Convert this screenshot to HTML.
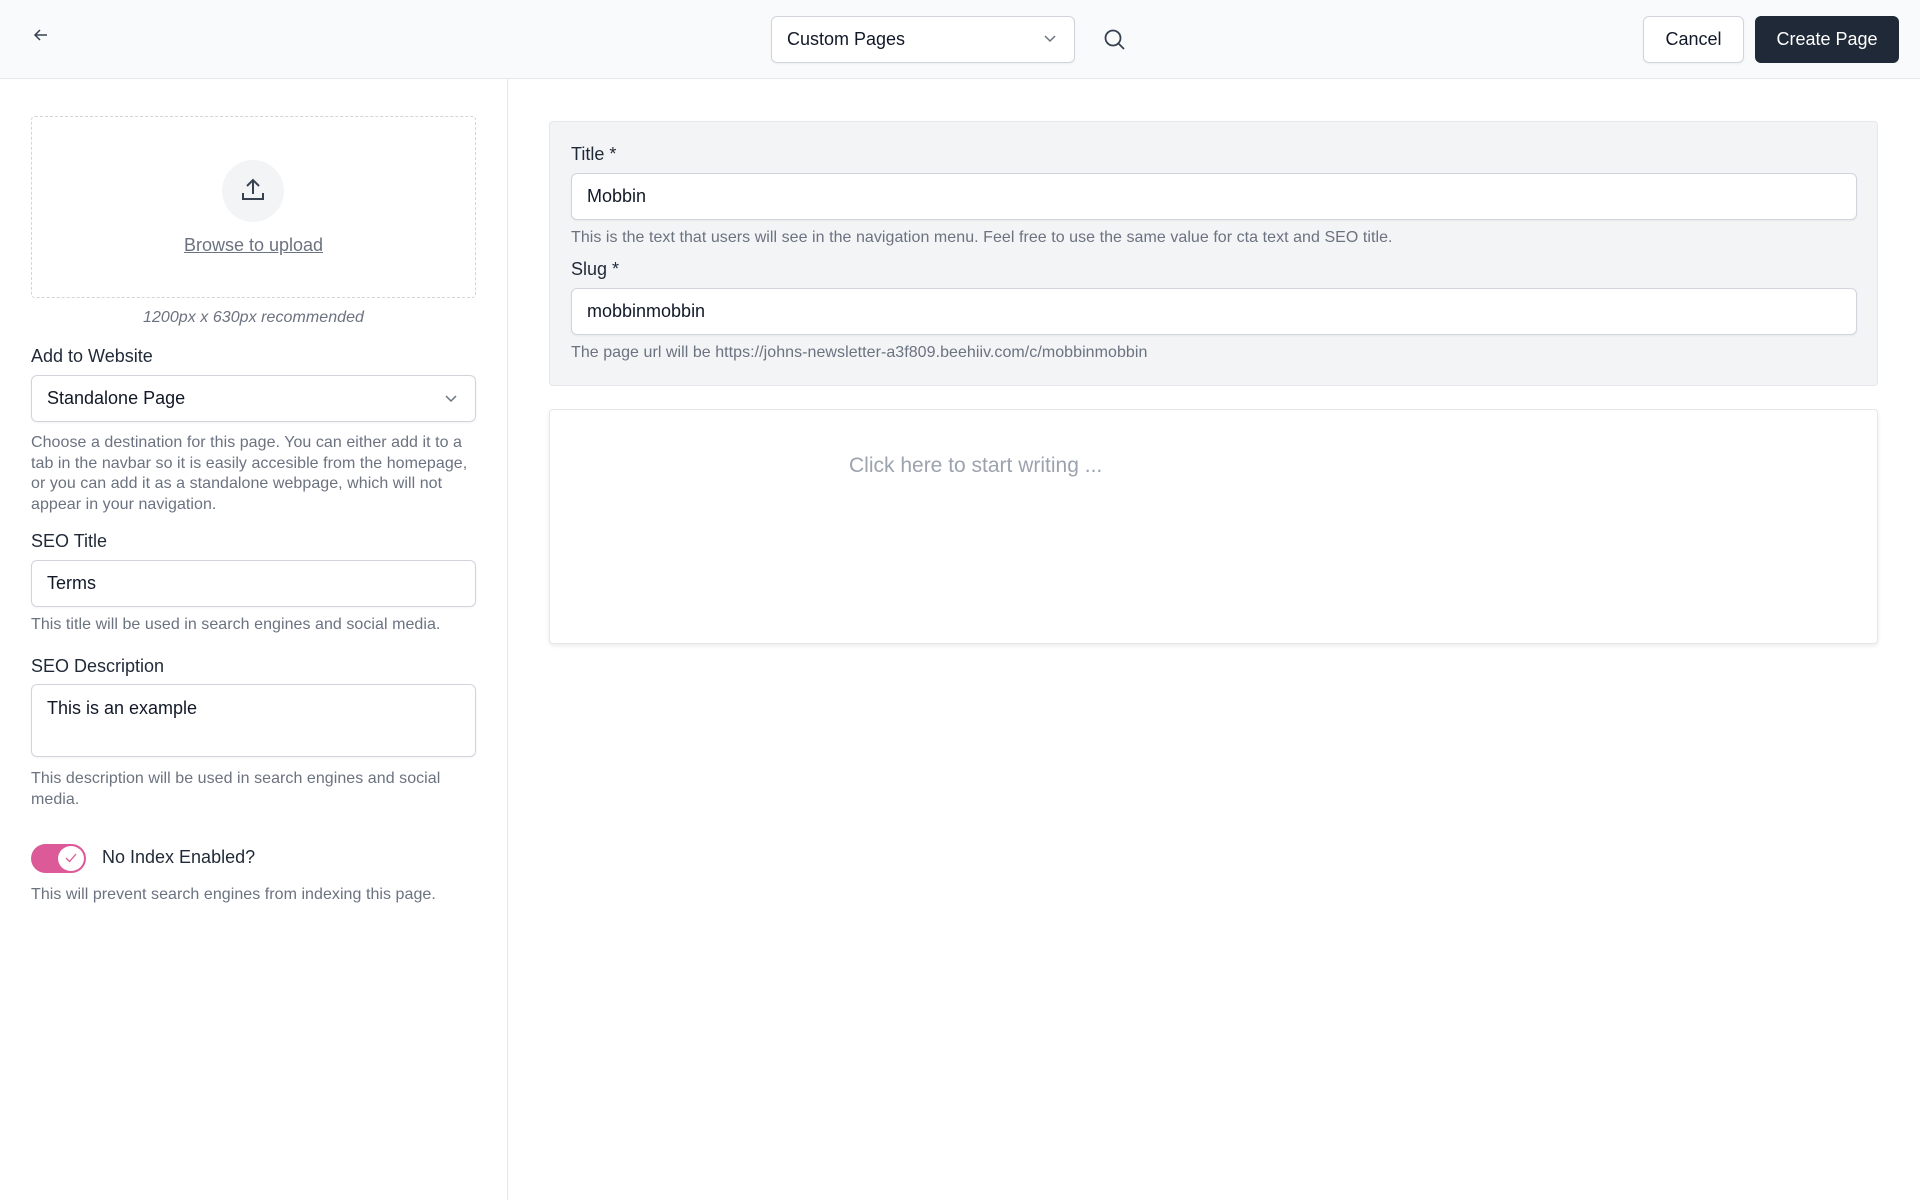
<!DOCTYPE html>
<html><head><style>
*{box-sizing:border-box;margin:0;padding:0}
body{width:1920px;height:1200px;background:#fff;font-family:"Liberation Sans",sans-serif;color:#111827;position:relative;overflow:hidden}
.a{position:absolute}
.top{left:0;top:0;width:1920px;height:79px;background:#f9fafb;border-bottom:1px solid #e5e7eb}
.box{border:1px solid #d1d5db;border-radius:6px;background:#fff;box-shadow:0 1px 2px rgba(0,0,0,.05)}
.lbl{font-size:18px;color:#1f2937}
.help{font-size:16px;color:#6b7280;line-height:20.5px;letter-spacing:0.05px}
.val{font-size:18px;color:#111827}
</style></head><body>
<div class="a top"></div>
<svg class="a" style="left:32px;top:28px" width="18" height="14" viewBox="0 0 18 14"><path d="M8 2 L3 7 L8 12 M3 7 H15" stroke="#374151" stroke-width="1.5" fill="none"/></svg>
<div class="a box" style="left:771px;top:16px;width:304px;height:47px"></div>
<div class="a val" style="left:787px;top:29px">Custom Pages</div>
<svg class="a" style="left:1043px;top:34px" width="14" height="10"><path d="M2 2 L7 7 L12 2" stroke="#6b7280" stroke-width="1.5" fill="none"/></svg>
<svg class="a" style="left:1103px;top:28px" width="24" height="24"><circle cx="10" cy="10" r="7.5" stroke="#374151" stroke-width="1.8" fill="none"/><path d="M15.5 15.5 L21 21" stroke="#374151" stroke-width="1.8"/></svg>
<div class="a box" style="left:1643px;top:16px;width:101px;height:47px"></div>
<div class="a val" style="left:1643px;top:29px;width:101px;text-align:center">Cancel</div>
<div class="a" style="left:1755px;top:16px;width:144px;height:47px;background:#1f2937;border-radius:6px;color:#fff;font-size:18px;text-align:center;line-height:47px">Create Page</div>
<div class="a" style="left:507px;top:79px;width:1px;height:1121px;background:#e5e7eb"></div>

<div class="a" style="left:31px;top:116px;width:445px;height:182px;border:1.5px dashed #d1d5db;border-radius:4px"></div>
<div class="a" style="left:222px;top:160px;width:62px;height:62px;border-radius:50%;background:#f3f4f6"></div>
<svg class="a" style="left:240px;top:177px" width="26" height="26"><path d="M13 3 V17 M7 9 L13 3 L19 9 M3 16 V22 H23 V16" stroke="#374151" stroke-width="2" fill="none"/></svg>
<div class="a" style="left:31px;top:235px;width:445px;text-align:center;font-size:18px;color:#6b7280;text-decoration:underline">Browse to upload</div>
<div class="a help" style="left:31px;top:308px;width:445px;text-align:center;font-style:italic">1200px x 630px recommended</div>
<div class="a lbl" style="left:31px;top:346px">Add to Website</div>
<div class="a box" style="left:31px;top:375px;width:445px;height:47px"></div>
<div class="a val" style="left:47px;top:388px">Standalone Page</div>
<svg class="a" style="left:444px;top:394px" width="14" height="10"><path d="M2 2 L7 7 L12 2" stroke="#6b7280" stroke-width="1.5" fill="none"/></svg>
<div class="a help" style="left:31px;top:433px;width:450px">Choose a destination for this page. You can either add it to a tab in the navbar so it is easily accesible from the homepage, or you can add it as a standalone webpage, which will not appear in your navigation.</div>
<div class="a lbl" style="left:31px;top:531px">SEO Title</div>
<div class="a box" style="left:31px;top:560px;width:445px;height:47px"></div>
<div class="a val" style="left:47px;top:573px">Terms</div>
<div class="a help" style="left:31px;top:615px">This title will be used in search engines and social media.</div>
<div class="a lbl" style="left:31px;top:656px">SEO Description</div>
<div class="a box" style="left:31px;top:684px;width:445px;height:73px"></div>
<div class="a val" style="left:47px;top:698px">This is an example</div>
<div class="a help" style="left:31px;top:769px;width:440px">This description will be used in search engines and social media.</div>
<div class="a" style="left:31px;top:844px;width:55px;height:29px;border-radius:15px;background:#db5a97"></div>
<div class="a" style="left:58px;top:846px;width:26px;height:25px;border-radius:50%;background:#fff"></div>
<svg class="a" style="left:64px;top:852px" width="14" height="12"><path d="M2 6 L5.5 9.5 L12 2" stroke="#db5a97" stroke-width="1.3" fill="none"/></svg>
<div class="a lbl" style="left:102px;top:847px">No Index Enabled?</div>
<div class="a help" style="left:31px;top:885px">This will prevent search engines from indexing this page.</div>

<div class="a" style="left:549px;top:121px;width:1329px;height:265px;background:#f3f4f6;border:1px solid #e5e7eb;border-radius:4px"></div>
<div class="a lbl" style="left:571px;top:144px">Title *</div>
<div class="a box" style="left:571px;top:173px;width:1286px;height:47px"></div>
<div class="a val" style="left:587px;top:186px">Mobbin</div>
<div class="a help" style="left:571px;top:228px">This is the text that users will see in the navigation menu. Feel free to use the same value for cta text and SEO title.</div>
<div class="a lbl" style="left:571px;top:259px">Slug *</div>
<div class="a box" style="left:571px;top:288px;width:1286px;height:47px"></div>
<div class="a val" style="left:587px;top:301px">mobbinmobbin</div>
<div class="a help" style="left:571px;top:343px">The page url will be https://johns-newsletter-a3f809.beehiiv.com/c/mobbinmobbin</div>
<div class="a" style="left:549px;top:409px;width:1329px;height:235px;background:#fff;border:1px solid #e5e7eb;border-radius:4px;box-shadow:0 2px 4px rgba(0,0,0,.08)"></div>
<div class="a" style="left:849px;top:454px;font-size:21px;color:#9ca3af">Click here to start writing ...</div>
</body></html>
